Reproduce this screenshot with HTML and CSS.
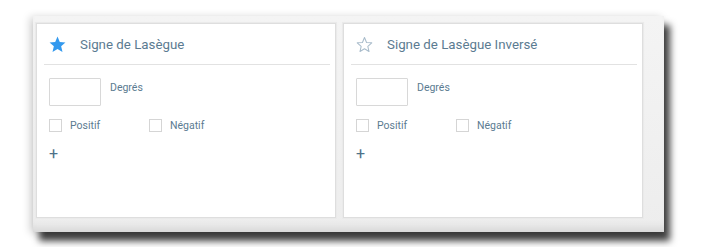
FILE: index.html
```html
<!DOCTYPE html>
<html lang="fr">
<head>
    <meta charset="UTF-8">
    <title>Signe de Lasègue</title>
    <link rel="stylesheet" href="styles.css">
</head>
<body>
    <div class="panel">
        <div class="card">
            <div class="card-head">
                <svg class="star" viewBox="0 0 24 24"><path d="M12 2l2.9 6.9 7.1.6-5.4 4.7 1.7 7.3L12 17.6l-6.3 3.9 1.7-7.3L2 9.5l7.1-.6z" fill="#3399ee"/></svg>
                <span class="title">Signe de Lasègue</span>
            </div>
            <div class="card-body">
                <div class="row">
                    <input type="text" class="deg">
                    <span class="label">Degrés</span>
                </div>
                <div class="checks">
                    <label class="check"><span class="box"></span>Positif</label>
                    <label class="check"><span class="box"></span>Négatif</label>
                </div>
                <div class="plus">+</div>
            </div>
        </div>
        <div class="card">
            <div class="card-head">
                <svg class="star" viewBox="0 0 24 24"><path d="M12 3.2l2.6 6.2 6.6.5-5 4.4 1.5 6.6L12 17.4l-5.7 3.5 1.5-6.6-5-4.4 6.6-.5z" fill="none" stroke="#a9bccb" stroke-width="1.3" stroke-linejoin="round"/></svg>
                <span class="title">Signe de Lasègue Inversé</span>
            </div>
            <div class="card-body">
                <div class="row">
                    <input type="text" class="deg">
                    <span class="label">Degrés</span>
                </div>
                <div class="checks">
                    <label class="check"><span class="box"></span>Positif</label>
                    <label class="check"><span class="box"></span>Négatif</label>
                </div>
                <div class="plus">+</div>
            </div>
        </div>
    </div>
</body>
</html>
```

FILE: styles.css
```css
html, body {
    margin: 0;
    min-height: 247px;
    background: #fff;
    font-family: Roboto, 'Liberation Sans', sans-serif;
    color: #5b7b91;
}
.panel {
    display: flex;
    gap: 7px;
    width: 631px;
    height: 216px;
    box-sizing: border-box;
    margin: 16px 0 15px 33px;
    padding: 7px 3px;
    background: linear-gradient(#f4f4f4, #ededed);
    box-shadow: inset 0 -10px 10px -6px rgba(0,0,0,0.1), 6px 9px 7px rgba(0,0,0,0.75), -3px 1px 8px rgba(0,0,0,0.18);
}
.card {
    width: 300px;
    height: 195px;
    box-sizing: border-box;
    background: #fff;
    border: 1px solid #dedede;
    box-shadow: 0 0 1px 1px #eaeaea;
}
.card-head {
    display: flex;
    align-items: center;
    height: 40px;
    margin: 0 5px 0 7px;
    padding-left: 4px;
    border-bottom: 1px solid #e2e2e2;
}
.star {
    width: 19px;
    height: 19px;
    margin-right: 13px;
}
.title {
    font-size: 13.3px;
    color: #5b7b91;
}
.card-body {
    padding: 13px 0 0 12px;
}
.row {
    display: flex;
    align-items: flex-start;
}
.deg {
    width: 52px;
    height: 28px;
    box-sizing: border-box;
    margin: 0;
    border: 1px solid #d8d8d8;
    border-radius: 1px;
}
.label {
    font-size: 10.5px;
    margin: 3px 0 0 9px;
}
.checks {
    display: flex;
    margin-top: 13px;
}
.check {
    display: flex;
    align-items: center;
    width: 100px;
    font-size: 10.5px;
}
.box {
    width: 13px;
    height: 13px;
    box-sizing: border-box;
    border: 1px solid #d5d5d5;
    margin-right: 8px;
}
.plus {
    font-size: 16px;
    color: #4f7189;
    margin-top: 12px;
    line-height: 20px;
}
```
